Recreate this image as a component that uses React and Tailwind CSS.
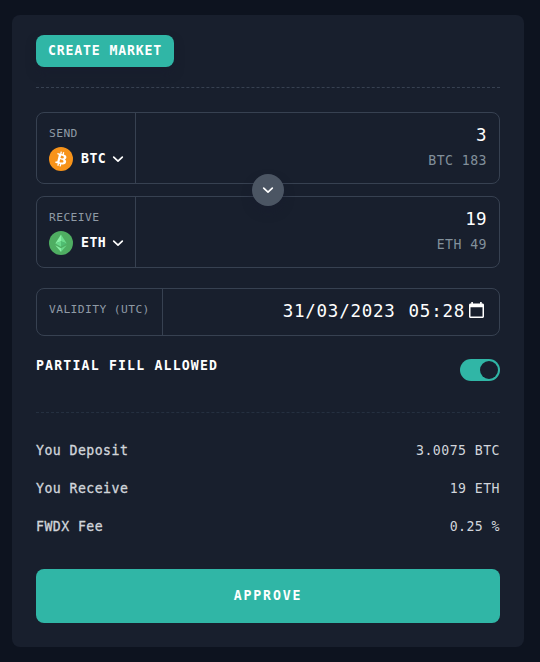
import React, { useState } from "react";

const summary = [
  { label: "You Deposit", value: "3.0075 BTC" },
  { label: "You Receive", value: "19 ETH" },
  { label: "FWDX Fee", value: "0.25 %" },
];

function BtcIcon() {
  return (
    <svg viewBox="0 0 32 32" className="h-6 w-6">
      <circle cx="16" cy="16" r="16" fill="#f7931a" />
      <path
        fill="#fff"
        fillRule="evenodd"
        d="M23.189 14.02c.314-2.096-1.283-3.223-3.465-3.975l.708-2.84-1.728-.43-.69 2.765c-.454-.114-.92-.22-1.385-.326l.695-2.783L15.596 6l-.708 2.839c-.376-.086-.746-.17-1.104-.26l.002-.009-2.384-.595-.46 1.846s1.283.294 1.256.312c.7.175.826.638.805 1.006l-.806 3.235c.048.012.11.03.18.057l-.183-.045-1.13 4.532c-.086.212-.303.531-.793.41.018.025-1.256-.313-1.256-.313l-.858 1.978 2.25.561c.418.105.828.215 1.231.318l-.715 2.872 1.727.43.708-2.84c.472.127.93.245 1.378.357l-.706 2.828 1.728.43.715-2.866c2.948.558 5.164.333 6.097-2.333.752-2.146-.037-3.385-1.588-4.192 1.13-.26 1.98-1.003 2.207-2.538zm-3.95 5.538c-.533 2.147-4.148.986-5.32.695l.95-3.805c1.172.293 4.929.872 4.37 3.11zm.535-5.569c-.487 1.953-3.495.96-4.47.717l.86-3.45c.975.243 4.118.696 3.61 2.733z"
      />
    </svg>
  );
}

function EthIcon() {
  return (
    <svg viewBox="0 0 32 32" className="h-6 w-6">
      <circle cx="16" cy="16" r="16" fill="#4fae62" />
      <path fill="#8af0a6" d="M16 4.5v9.1L8.4 16.6z" />
      <path fill="#6bdc8c" d="M16 4.5v9.1l7.6 3z" />
      <path fill="#69d98a" d="M8.4 16.6l7.6-3v7.3z" />
      <path fill="#50bd72" d="M23.6 16.6l-7.6-3v7.3z" />
      <path fill="#8af0a6" d="M8.4 18.9l7.6 4.2v4.9z" />
      <path fill="#69d98a" d="M23.6 18.9L16 23.1v4.9z" />
    </svg>
  );
}

function Chevron() {
  return (
    <svg viewBox="0 0 12 12" className="h-3 w-3" fill="none" stroke="currentColor" strokeWidth="1.7" strokeLinecap="round" strokeLinejoin="round">
      <path d="M1.7 4.1L6 8.1L10.3 4.1" />
    </svg>
  );
}

function CalendarIcon() {
  return (
    <svg viewBox="0 0 15 16" className="h-4 w-[15px]" fill="#fff">
      <path fillRule="evenodd" d="M2.3 0h1.6v1.5h7.2V0h1.6v1.5h.8c.8 0 1.5.6 1.5 1.4v11.6c0 .8-.7 1.5-1.5 1.5h-12C.7 16 0 15.3 0 14.5V2.9C0 2.1.7 1.5 1.5 1.5h.8zM1.5 5.3v9.2h12V5.3z" />
    </svg>
  );
}

function TokenRow({ title, icon, symbol, amount, balance }) {
  return (
    <div className="flex h-[72px] rounded-lg border border-[#374151]">
      <div className="w-[99px] border-r border-[#374151] pl-3 pt-[13px]">
        <div className="text-[11.3px] leading-4 tracking-[0.4px] text-[#8f9aa5]">{title}</div>
        <button type="button" className="mt-[5px] flex items-center text-white">
          {icon}
          <span className="ml-2 text-[13.2px] font-bold leading-6 tracking-[0.45px]">{symbol}</span>
          <span className="ml-1.5">
            <Chevron />
          </span>
        </button>
      </div>
      <div className="flex-1 pr-3 pt-2 text-right">
        <div className="text-[17.5px] leading-7 tracking-[0.4px] text-white">{amount}</div>
        <div className="text-[13.2px] leading-6 tracking-[0.45px] text-[#82909b]">{balance}</div>
      </div>
    </div>
  );
}

export default function App() {
  const [partialFill, setPartialFill] = useState(true);

  return (
    <div className="h-[662px] bg-[#0d131f] px-3 pt-[15px] font-['DejaVu_Sans_Mono','Liberation_Mono',monospace]">
      <main className="h-[632px] w-[512px] rounded-lg bg-[#181f2d] px-6 pt-5">
        <button type="button" className="block h-8 w-[138px] rounded-lg bg-[#30b6a6] text-[13.2px] font-bold leading-8 tracking-[0.82px] text-white shadow-[0_6px_10px_rgba(23,27,46,0.5)]">
          CREATE MARKET
        </button>
        <div className="mt-5 border-t border-dashed border-[#374151]" />

        <div className="relative mt-6 flex flex-col gap-3">
          <TokenRow title="SEND" icon={<BtcIcon />} symbol="BTC" amount="3" balance="BTC 183" />
          <TokenRow title="RECEIVE" icon={<EthIcon />} symbol="ETH" amount="19" balance="ETH 49" />
          <button type="button" className="absolute left-1/2 top-1/2 flex h-8 w-8 -translate-x-1/2 -translate-y-1/2 items-center justify-center rounded-full bg-[#4b5563] text-white shadow-[0_6px_10px_rgba(23,27,46,0.5)]">
            <Chevron />
          </button>
        </div>

        <div className="mt-5 flex h-12 rounded-lg border border-[#374151]">
          <div className="w-[126px] border-r border-[#374151] pl-3 pt-[13px] text-[11.3px] leading-4 tracking-[0.4px] text-[#8f9aa5]">
            VALIDITY (UTC)
          </div>
          <div className="flex flex-1 items-center justify-end pb-0.5 pr-[15px] text-[17.5px] tracking-[0.75px] text-white">
            <span>31/03/2023</span>
            <span className="ml-[13px]">05:28</span>
            <span className="ml-1 pb-0.5">
              <CalendarIcon />
            </span>
          </div>
        </div>

        <div className="mt-[23px] flex h-[22px] justify-between">
          <span className="text-[13.2px] font-bold leading-[14px] tracking-[1.17px] text-white">PARTIAL FILL ALLOWED</span>
          <button
            type="button"
            role="switch"
            aria-checked={partialFill}
            onClick={() => setPartialFill(!partialFill)}
            className={`flex h-[22px] w-10 items-center rounded-full px-0.5 ${
              partialFill ? "justify-end bg-[#30b6a6]" : "justify-start bg-[#4b5563]"
            }`}
          >
            <span className="h-[18px] w-[18px] rounded-full bg-[#181f2d]" />
          </button>
        </div>
        <div className="mt-[31px] border-t border-dashed border-[#253040]" />

        <dl className="mt-7 flex flex-col gap-[18px] text-[13.2px] leading-5 tracking-[0.45px] text-[#d1d5db]">
          {summary.map((row) => (
            <div key={row.label} className="flex justify-between">
              <dt className="[-webkit-text-stroke:0.3px_#d1d5db]">{row.label}</dt>
              <dd>{row.value}</dd>
            </div>
          ))}
        </dl>

        <button type="button" className="mt-8 h-[54px] w-full rounded-lg bg-[#30b6a6] text-[13.2px] font-bold tracking-[1.85px] text-white">
          APPROVE
        </button>
      </main>
    </div>
  );
}
